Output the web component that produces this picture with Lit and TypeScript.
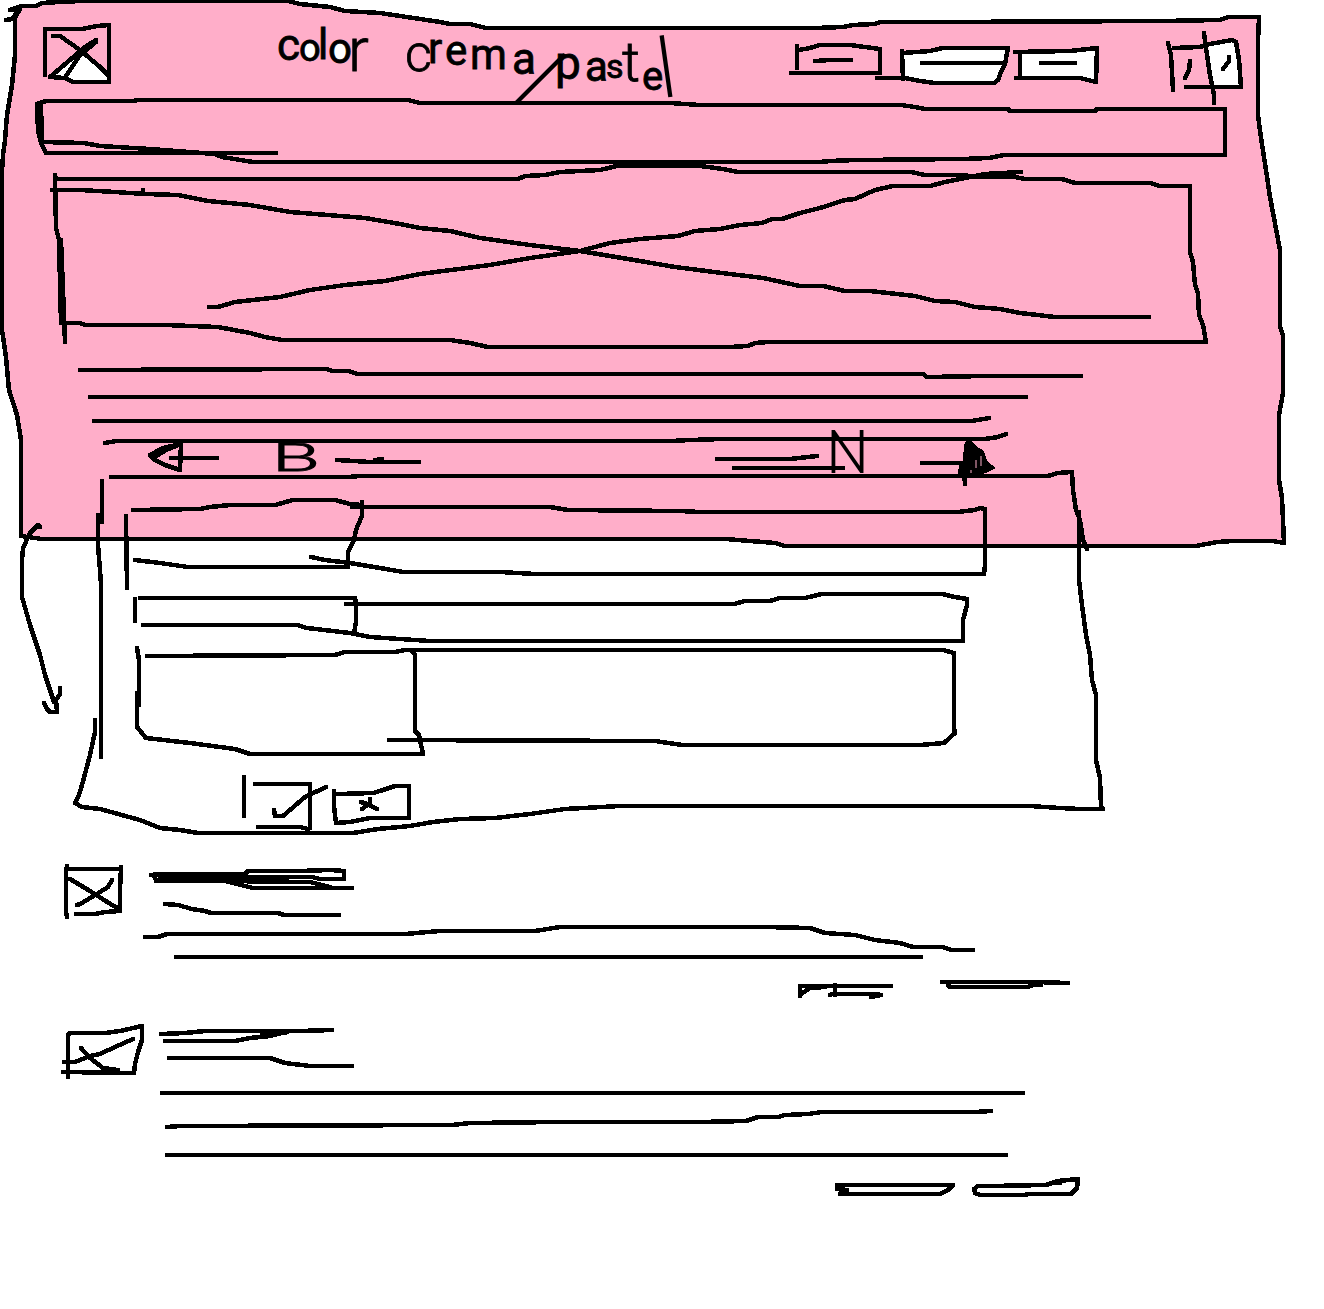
import { LitElement, html, svg, css } from "lit";
import { customElement } from "lit/decorators.js";

type Stroke = string;

const FRAME =
  "10,10 22,6 36,6 42,3 60,2 80,1 288,1 300,4 330,7 345,11 380,13 440,22 450,24 470,24 486,28 815,28 843,27 853,25 875,24 880,22 937,22 1161,21 1220,20 1228,17 1259,17 1258,42 1258,115 1261,138 1266,170 1270,197 1280,250 1280,327 1283,335 1283,393 1279,415 1279,480 1282,498 1284,543 1273,541 1233,541 1217,542 1196,546 785,546 775,543 750,541 726,539 42,539 21,536 21,440 17,415 9,390 6,357 2,330 2,172 3,155 5,140 7,115 12,85 15,55 15,18 20,9";

const WHITE: Stroke[] = [
  "53,76 82,53 108,75 108,81 74,81",
  "903,53 930,51 943,48 1008,48 1005,64 998,80 994,83 935,83 905,78",
  "1020,52 1070,51 1097,48 1096,82 1080,78 1020,78",
  "1208,45 1233,41 1236,42 1240,86 1212,86",
];

const HEADER: Stroke[] = [
  "6,20 12,19 18,11",
  "45,75 45,29 82,29 97,26 109,25 109,82 73,82 65,78 50,77",
  "53,36 60,36 80,50 100,67 108,75",
  "96,40 85,47 50,77",
  "96,42 80,55 66,76",
  "797,46 797,68",
  "799,50 810,48 820,45 850,45 880,49 880,73 791,73",
  "815,61 830,60 851,60",
  "902,51 903,79",
  "903,53 930,51 943,48 1008,48 1005,64 1001,72 998,80 994,83 935,83 920,81 905,78 877,78",
  "922,63 1005,63",
  "1015,52 1070,51 1097,48 1096,82 1080,78 1016,78",
  "1020,52 1020,78",
  "1041,63 1075,63",
  "1168,43 1171,55 1173,90",
  "1174,48 1200,47 1210,44 1232,40 1236,42 1239,60 1241,87 1186,87",
  "1204,33 1206,48 1210,75 1214,95 1214,103",
  "1190,61 1189,70 1185,78",
  "1229,57 1229,61 1223,69",
  "276,153 46,153 41,143 38,130 37,104 46,101 135,101 136,100 408,100 420,103 670,103 700,105 901,105 915,107 925,109 1008,109 1010,111 1095,111 1097,109 1225,109 1225,155 1004,155 989,158 963,159 856,160 830,161 820,162 253,162 222,157 215,154 150,149 100,146 84,143 42,142",
  "41,107 42,142",
];

const HERO: Stroke[] = [
  "55,175 56,179 518,179 525,176 545,175 560,172 600,170 617,166 700,166 723,169 738,172 911,172 925,175 963,175 975,177 1015,177 1025,179 1062,179 1075,183 1150,183 1160,186 1190,186 1190,252 1193,262 1195,285 1198,293 1199,315 1203,325 1206,342 768,342 755,343 748,346 730,347 488,347 470,343 450,340 282,340 265,337 250,333 218,327 165,325 85,325 80,323 61,323",
  "55,176 56,228 59,240 61,323",
  "61,240 63,290 65,342",
  "52,190 80,190 115,192 145,194 178,195 208,201 250,205 290,212 365,218 400,224 420,228 450,231 480,238 530,245 580,251 640,261 675,267 730,274 763,278 800,286 823,286 845,291 870,291 915,296 935,301 955,302 975,307 1000,309 1020,313 1055,317 1149,317",
  "209,307 218,307 235,302 280,297 310,290 345,285 385,281 420,274 490,265 530,258 580,251 610,243 640,239 678,236 695,231 720,229 740,225 762,223 772,219 782,219 800,213 820,208 845,200 855,199 875,190 893,186 930,186 945,182 965,178 985,174 1021,172",
  "143,190 143.1,190",
  "80,370 327,369 332,371 348,371 358,374 923,374 927,377 987,376 1081,376",
  "90,397 1026,397",
  "94,421 972,421 989,418",
  "105,443 116,441 672,441 690,440 722,439 985,439 998,437 1006,434",
];

const PAGER: Stroke[] = [
  "181,444 163,448 150,455 155,460 165,465 180,470 181,444",
  "176,446 166,450 156,456",
  "171,458 217,458",
  "337,460 370,462 419,462",
  "375,460 382,459",
  "717,459 790,459 817,456",
  "734,468 843,468",
  "922,463 965,463",
  "964,470 965,484",
];

const FORM: Stroke[] = [
  "111,477 348,477 360,476 1048,476 1058,473 1072,472 1073,490 1076,510 1080,520 1083,540 1087,549",
  "102,481 102,522",
  "98,515 98,545 100,570 101,585 101,757",
  "95,720 95,732 90,755 82,785 79,795 75,803 82,807 100,809 140,820 160,828 180,830 198,833 353,833 378,829 410,826 433,822 460,819 495,818 530,814 565,809 620,806 1030,806 1060,808 1080,809 1103,809 1101,806 1100,778 1096,760 1096,695 1092,680 1090,655 1086,635 1082,605 1079,580 1079,512",
  "133,510 200,509 210,507 230,505 275,505 293,500 335,500 350,504 362,505 362,516 356,530 354,540 348,552 348,567 188,567 160,563 135,560",
  "126,516 127,588",
  "362,502 362,507 352,507 550,507 568,510 680,511 700,512 958,512 975,510 980,508 985,509 985,565 984,574 535,574 500,572 403,572 380,568 350,563 325,560 311,557",
  "135,599 135,621",
  "140,598 355,598 356,604 356,622 354,633",
  "143,625 297,625 307,628 350,633 370,637 430,641 963,641 963,620 967,605 967,599 955,597 942,594 822,594 805,598 780,598 770,601 745,601 734,604 346,604",
  "147,656 335,655 345,652 395,652 405,650 943,650 954,653 954,728 955,733 944,743 920,745 682,745 655,741 389,740",
  "137,648 139,660 139,705",
  "137,693 137,727 146,738 190,743 235,749 250,754 423,754 419,735 415,731 415,655 411,650",
  "244,777 244,816",
  "255,784 310,784 310,828",
  "258,827 300,827 308,829",
  "274,810 275,816 283,816 305,797 326,787",
  "334,791 334,806 336,823 350,822 370,818 409,818 409,786 395,786 380,791 373,793 338,794",
  "361,802 367,804 377,809",
  "370,799 370,803 362,809",
  "40,527 38,525 30,533 23,548 22,560 22,597 30,625 40,655 45,675 54,702",
  "60,688 60,694 56,700 57,712 50,712 47,709 44,703",
];

const ENTRIES: Stroke[] = [
  "67,866 66,870 66,912 67,917",
  "67,869 121,869 121,867 120,890 120,911 105,912 95,914 76,914",
  "70,879 90,891 112,905 120,909",
  "112,880 108,887 92,897 80,904 77,905",
  "151,875 160,874 245,874 248,871 300,871 330,870 344,871 344,879 320,879 312,877 160,877",
  "156,881 225,881 253,888 352,888",
  "153,875 157,881",
  "225,881 310,882 330,887",
  "188,878 240,878",
  "165,904 178,905 192,909 205,911 211,913 278,913 284,915 339,915",
  "145,937 158,937 167,934 405,934 440,931 535,931 560,927 764,927 810,928 825,933 855,935 875,940 900,943 913,947 942,947 952,950 973,950",
  "176,957 921,957",
  "800,996 800,986 891,986",
  "801,994 810,988 825,987",
  "835,985 835,995",
  "830,995 832,994 875,994 881,995 871,997",
  "942,982 1035,982 1068,983",
  "948,985 950,987 1028,987 1033,985 1041,985",
  "68,1077 68,1035 70,1033 105,1033 120,1031 142,1026 142,1040 138,1052 135,1064 134,1073 63,1072",
  "64,1062 75,1062 90,1056 100,1054 115,1047 133,1039",
  "81,1048 90,1058 103,1068 118,1070",
  "161,1034 185,1033 205,1031 300,1031 332,1030",
  "165,1041 235,1041 250,1038 270,1036 290,1031",
  "262,1034 285,1033",
  "169,1058 270,1058 285,1063 310,1066 352,1066",
  "162,1093 1023,1093",
  "167,1127 180,1126 452,1125 470,1123 560,1122 700,1122 746,1121 758,1117 778,1117 785,1115 808,1114 822,1112 975,1112 991,1111",
  "167,1155 1006,1155",
  "837,1185 953,1185 948,1190 940,1194 840,1194",
  "837,1189 847,1190",
  "1078,1179 1058,1181 1046,1185 990,1186 978,1186 974,1189 975,1193 980,1195 1025,1195 1028,1194 1071,1194 1077,1188 1078,1180",
  "1052,1183 1060,1183",
];

/* One hand-lettered character: glyph, left edge, baseline, size, weight, tilt. */
type Glyph = [string, number, number, number, number?, number?];

const NOTE: Glyph[] = [
  ["c", 277, 60, 44],
  ["o", 299, 61, 38],
  ["l", 318, 59, 42],
  ["o", 328, 63, 42],
  ["r", 348, 71, 62, 300],
  [" ", 372, 71, 42],
  ["c", 405, 71, 52, 300],
  ["r", 428, 63, 42],
  ["e", 445, 65, 42],
  ["m", 470, 69, 42],
  ["a", 512, 74, 44],
  ["/", 517, 96, 80, 100, 24],
  ["p", 555, 79, 46],
  ["a", 585, 81, 42],
  ["s", 606, 78, 34],
  ["t", 622, 81, 56, 300],
  ["e", 642, 90, 40],
  ["l", 662, 97, 80, 100, -8],
];

@customElement("app-root")
export class AppRoot extends LitElement {
  static styles = css`
    :host {
      display: block;
      background: #ffffff;
    }
    .board {
      display: block;
      width: 1324px;
      height: 1309px;
    }
    .frame {
      fill: #ffaec9;
    }
    .blank {
      fill: #ffffff;
    }
    .ink {
      fill: none;
      stroke: #000000;
      stroke-width: 4.5;
      stroke-linecap: round;
      stroke-linejoin: round;
      shape-rendering: crispEdges;
    }
    .solid {
      fill: #000000;
      shape-rendering: crispEdges;
    }
    .scratch {
      stroke: #ffaec9;
      stroke-width: 1;
    }
    .letter {
      font-family: Roboto, "Liberation Sans", sans-serif;
      fill: #000000;
      stroke: #000000;
      stroke-width: 0.8;
      white-space: pre;
    }
    .hairline {
      stroke-width: 2.2;
    }
  `;

  private strokes(list: Stroke[]) {
    return svg`<g class="ink">${list.map((p) => svg`<polyline points=${p}></polyline>`)}</g>`;
  }

  render() {
    return html`
      <svg class="board" viewBox="0 0 1324 1309">
        <polygon class="frame" points=${FRAME}></polygon>
        <g class="blank">
          ${WHITE.map((p) => svg`<polygon points=${p}></polygon>`)}
          <ellipse cx="310" cy="51" rx="7" ry="9"></ellipse>
          <ellipse cx="340" cy="52" rx="8" ry="10"></ellipse>
          <rect x="450" y="46" width="12" height="7"></rect>
        </g>
        <polygon class="ink" points=${FRAME}></polygon>
        ${this.strokes(HEADER)}
        <text class="letter">${NOTE.map(
          ([ch, x, y, size, weight = 400, tilt = 0]) =>
            svg`<tspan class=${weight === 100 ? "hairline" : ""} x=${x} y=${y} font-size=${size} font-weight=${weight} rotate=${tilt}>${ch}</tspan>`
        )}</text>
        ${this.strokes(HERO)}
        ${this.strokes(PAGER)}
        <polygon
          class="solid"
          points="967,440 970,439 976,446 984,451 987,461 996,468 986,473 968,477 958,475 959,464 963,460 964,445"
        ></polygon>
        <path class="scratch" d="M976 460v8M981 456v10M971 470v3"></path>
        <text class="letter" font-size="38" font-weight="300" transform="translate(272 471) scale(2.05 1)">B</text>
        <text class="letter hairline" x="827" y="472" font-size="58" font-weight="100">N</text>
        ${this.strokes(FORM)}
        ${this.strokes(ENTRIES)}
      </svg>
    `;
  }
}
